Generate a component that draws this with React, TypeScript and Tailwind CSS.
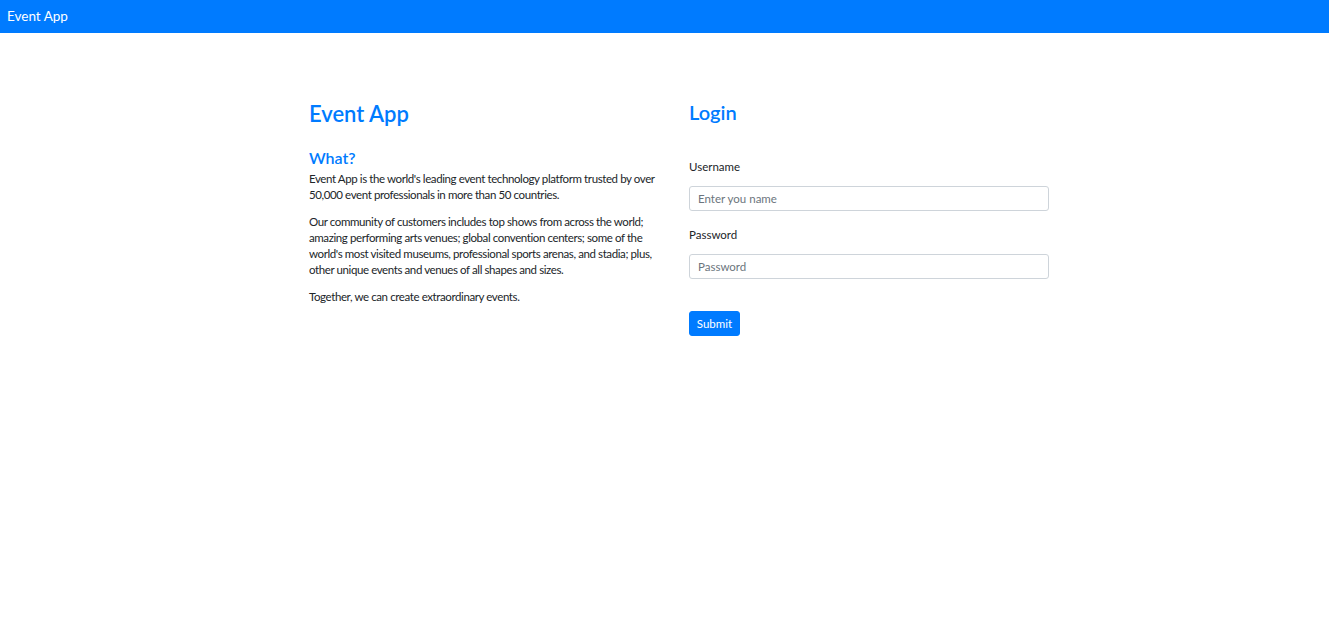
import React from "react";

export default function App() {
  return (
    <div className="min-h-[637px] bg-white text-[#212529]" style={{ fontFamily: 'Lato, "Noto Sans", sans-serif' }}>
      <nav className="h-[33px] bg-[#007bff] flex items-center px-[7px]">
        <span className="text-white text-[13.5px] leading-none">Event App</span>
      </nav>
      <div className="pl-[309px] pt-[67px] flex gap-[20px]">
        <div className="w-[360px]">
          <h1 className="text-[#007bff] text-[22px] leading-[28px] font-semibold m-0">Event App</h1>
          <h2 className="text-[#007bff] text-[16px] leading-[20px] font-semibold mt-[20px] mb-[3px]">What?</h2>
          <p className="text-[11.5px] leading-[16px] mb-[11px] tracking-[-0.4px]">
            Event App is the world's leading event technology platform trusted by over 50,000 event professionals in more than 50 countries.
          </p>
          <p className="text-[11.5px] leading-[16px] mb-[11px] tracking-[-0.4px]">
            Our community of customers includes top shows from across the world; amazing performing arts venues; global convention centers; some of the world's most visited museums, professional sports arenas, and stadia; plus, other unique events and venues of all shapes and sizes.
          </p>
          <p className="text-[11.5px] leading-[16px] tracking-[-0.4px]">Together, we can create extraordinary events.</p>
        </div>
        <div className="w-[360px]">
          <h2 className="text-[#007bff] text-[20px] leading-[26px] font-semibold -mt-[1px]">Login</h2>
          <form className="mt-[34px]" onSubmit={(e) => e.preventDefault()}>
            <label className="block text-[11.5px] leading-[16px]">Username</label>
            <input
              className="mt-[11px] block w-[360px] h-[25px] border border-[#ced4da] rounded-[3px] px-[8px] text-[11.5px] placeholder:text-[#6c757d] outline-none"
              placeholder="Enter you name"
            />
            <label className="block mt-[16px] text-[11.5px] leading-[16px]">Password</label>
            <input
              type="password"
              className="mt-[11px] block w-[360px] h-[25px] border border-[#ced4da] rounded-[3px] px-[8px] text-[11.5px] placeholder:text-[#6c757d] outline-none"
              placeholder="Password"
            />
            <button
              type="submit"
              className="mt-[32px] h-[25px] w-[51px] bg-[#007bff] text-white text-[11.5px] rounded-[3px] border border-[#007bff]"
            >
              Submit
            </button>
          </form>
        </div>
      </div>
    </div>
  );
}
